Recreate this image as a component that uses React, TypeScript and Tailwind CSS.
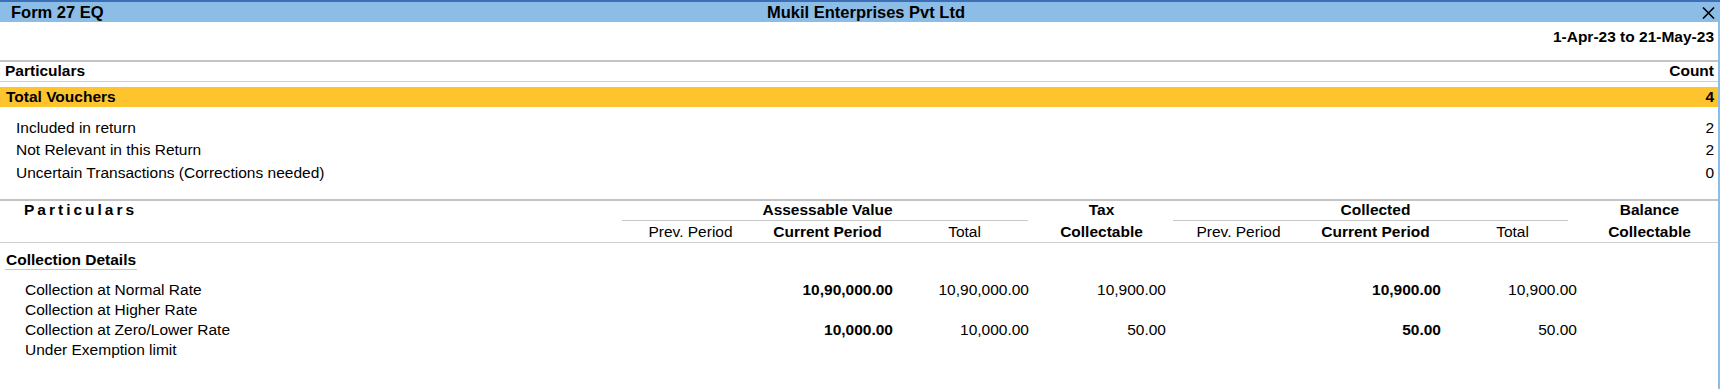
import React from "react";

const COL = "w-[137px] shrink-0";

function HeaderGroup({
  title,
  subs,
  lineCls,
}: {
  title: string;
  subs: { t: string; b?: boolean }[];
  lineCls: string;
}) {
  return (
    <div className="flex flex-col">
      <div className="h-[19px] relative flex justify-center font-bold leading-[16px]">
        {title}
        <div className={`absolute bottom-0 h-px bg-[#c8c8c8] ${lineCls}`} />
      </div>
      <div className="flex h-[21px] items-center">
        {subs.map((s, i) => (
          <div key={i} className={`${COL} text-center leading-[18px] ${s.b ? "font-bold" : ""}`}>
            {s.t}
          </div>
        ))}
      </div>
    </div>
  );
}

function HeaderSingle({ a, b }: { a: string; b: string }) {
  return (
    <div className={`${COL} flex flex-col font-bold`}>
      <div className="h-[19px] flex justify-center leading-[16px]">{a}</div>
      <div className="h-[21px] flex items-center justify-center leading-[18px]">{b}</div>
    </div>
  );
}

type Row = {
  name: string;
  cells: (string | null)[];
};

const rows: Row[] = [
  {
    name: "Collection at Normal Rate",
    cells: [null, "10,90,000.00", "10,90,000.00", "10,900.00", null, "10,900.00", "10,900.00", null],
  },
  { name: "Collection at Higher Rate", cells: [null, null, null, null, null, null, null, null] },
  {
    name: "Collection at Zero/Lower Rate",
    cells: [null, "10,000.00", "10,000.00", "50.00", null, "50.00", "50.00", null],
  },
  { name: "Under Exemption limit", cells: [null, null, null, null, null, null, null, null] },
];

const boldCols = [1, 5];

export default function App() {
  return (
    <div className="w-[1720px] h-[389px] bg-white flex flex-col font-['Liberation_Sans',Arial,sans-serif] text-[15.5px] text-black overflow-hidden">
      <div className="h-[2px] bg-[#3c6fb6] shrink-0" />
      <div className="flex-1 flex flex-col border-r-2 border-[#8cbde6]">
        {/* Title bar */}
        <div className="h-[20px] bg-[#8cbde6] grid grid-cols-[1fr_auto_1fr] items-center font-bold text-[16.5px] leading-[18px]">
          <div className="pl-[11px]">Form 27 EQ</div>
          <div className="pl-[14px]">Mukil Enterprises Pvt Ltd</div>
          <div className="flex justify-end pr-[3px]">
            <svg width="13" height="12" viewBox="0 0 13 12" className="mt-[2px]">
              <path d="M1 0.5 L12 11.5 M12 0.5 L1 11.5" stroke="#000" strokeWidth="1.6" fill="none" />
            </svg>
          </div>
        </div>

        {/* Date */}
        <div className="h-[38px] flex justify-end pr-[4px] pt-[6px] font-bold leading-[18px]">
          1-Apr-23 to 21-May-23
        </div>
        <div className="h-[2px] bg-[#c4c4c4]" />

        {/* Summary header */}
        <div className="h-[20px] flex justify-between border-b border-[#cfcfcf] font-bold leading-[18px] pl-[5px] pr-[4px]">
          <span>Particulars</span>
          <span>Count</span>
        </div>
        <div className="mt-[5px] h-[20px] bg-[#fec42e] flex items-center justify-between font-bold leading-[18px] pl-[6px] pr-[4px]">
          <span>Total Vouchers</span>
          <span>4</span>
        </div>
        <div className="mt-[9.5px] flex flex-col">
          {[
            ["Included in return", "2"],
            ["Not Relevant in this Return", "2"],
            ["Uncertain Transactions (Corrections needed)", "0"],
          ].map(([a, b]) => (
            <div key={a} className="h-[22.5px] flex items-center justify-between leading-[18px] pl-[16px] pr-[4px]">
              <span>{a}</span>
              <span>{b}</span>
            </div>
          ))}
        </div>

        <div className="mt-[15px] h-[2px] bg-[#c4c4c4]" />

        {/* Detail header */}
        <div className="flex border-b border-[#cfcfcf] pt-[1px]">
          <div className="flex-1 pl-[24px] font-bold tracking-[3px] leading-[16px]">Particulars</div>
          <HeaderGroup
            title="Assessable Value"
            subs={[{ t: "Prev. Period" }, { t: "Current Period", b: true }, { t: "Total" }]}
            lineCls="left-0 right-[5px]"
          />
          <HeaderSingle a="Tax" b="Collectable" />
          <HeaderGroup
            title="Collected"
            subs={[{ t: "Prev. Period" }, { t: "Current Period", b: true }, { t: "Total" }]}
            lineCls="left-[3px] right-[13px]"
          />
          <HeaderSingle a="Balance" b="Collectable" />
        </div>

        {/* Body */}
        <div className="pt-[5px] pl-[5px]">
          <span className="inline-block font-bold leading-[18px] pl-[1px] pr-[1px] border-b border-[#c8c8c8]">
            Collection Details
          </span>
        </div>
        <div className="mt-[9px] flex flex-col">
          {rows.map((r) => (
            <div key={r.name} className="h-[20px] flex items-center leading-[18px]">
              <div className="flex-1 pl-[25px]">{r.name}</div>
              {r.cells.map((c, i) => (
                <div
                  key={i}
                  className={`${COL} text-right ${boldCols.includes(i) ? "font-bold pr-[3px]" : "pr-[4px]"}`}
                >
                  {c ?? ""}
                </div>
              ))}
            </div>
          ))}
        </div>
      </div>
    </div>
  );
}
